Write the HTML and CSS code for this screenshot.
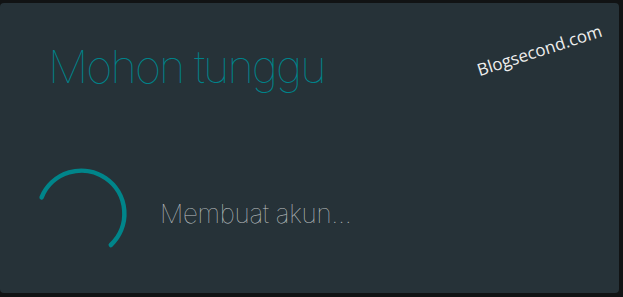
FILE: index.html
```html
<!DOCTYPE html>
<html lang="id">
<head>
  <meta charset="UTF-8">
  <meta name="viewport" content="width=device-width, initial-scale=1.0">
  <title>Mohon tunggu</title>
  <link rel="stylesheet" href="styles.css">
</head>
<body>
  <div class="dialog">
    <h1 class="title">Mohon tunggu</h1>
    <div class="progress">
      <svg class="spinner" width="96" height="96" viewBox="0 0 96 96">
        <path d="M7.6 32.3 A43 43 0 1 1 76.8 80" fill="none" stroke="#00858a" stroke-width="4.5" stroke-linecap="round"/>
      </svg>
      <p class="status">Membuat akun...</p>
    </div>
    <span class="watermark">Blogsecond.com</span>
  </div>
</body>
</html>
```

FILE: styles.css
```css
body {
  margin: 0;
  background-color: #111314;
  height: 297px;
  padding: 3px 4px 4px 0;
  box-sizing: border-box;
  font-family: Inter, "Noto Sans", sans-serif;
}
.dialog {
  position: relative;
  height: 100%;
  background-color: #263238;
  border-radius: 4px;
  padding: 36px 0 0 48px;
  box-sizing: border-box;
}
.title {
  margin: 0;
  font-weight: 100;
  font-size: 45px;
  line-height: 56px;
  color: #00838a;
  letter-spacing: -1.9px;
}
.progress {
  display: flex;
  align-items: center;
  margin-top: 70px;
  margin-left: -14px;
}
.spinner {
  display: block;
}
.status {
  margin: 0 0 0 30px;
  font-weight: 100;
  font-size: 26px;
  color: #bfc1c2;
  letter-spacing: -0.3px;
}
.watermark {
  position: absolute;
  left: 481px;
  top: 55px;
  font-family: "Open Sans", sans-serif;
  font-size: 17px;
  color: #eeeeee;
  transform: rotate(-18deg);
  transform-origin: left bottom;
}
```
